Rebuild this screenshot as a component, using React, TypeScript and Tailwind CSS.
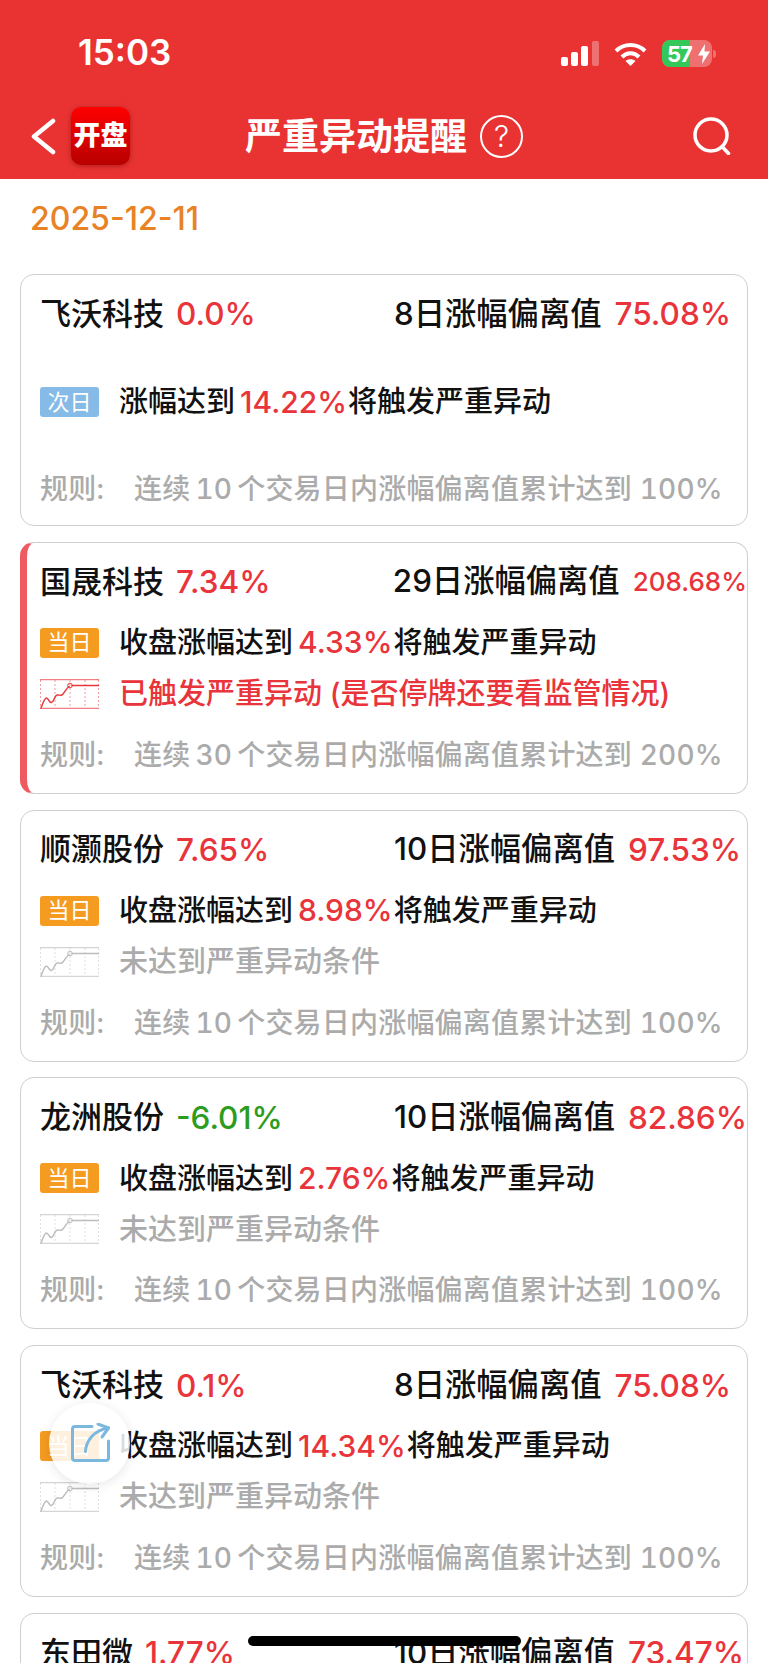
import { FC } from "react";

type Stock = {
	name: string;
	pct: string;
	green?: boolean;
	days: string;
	value: string;
	small?: boolean;
	tag: "次日" | "当日";
	prefix: string;
	target: string;
	status?: string;
	hit?: boolean;
	rule: string;
};

const RULE_10 = "连续\u200910\u2009个交易日内涨幅偏离值累计达到 100%";
const NOT_MET = "未达到严重异动条件";

const stocks: Stock[] = [
	{ name: "飞沃科技", pct: "0.0%", days: "8日涨幅偏离值", value: "75.08%", tag: "次日", prefix: "涨幅达到", target: "14.22%", rule: RULE_10 },
	{
		name: "国晟科技",
		pct: "7.34%",
		days: "29日涨幅偏离值",
		value: "208.68%",
		small: true,
		tag: "当日",
		prefix: "收盘涨幅达到",
		target: "4.33%",
		status: "已触发严重异动 (是否停牌还要看监管情况)",
		hit: true,
		rule: "连续\u200930\u2009个交易日内涨幅偏离值累计达到 200%",
	},
	{ name: "顺灏股份", pct: "7.65%", days: "10日涨幅偏离值", value: "97.53%", tag: "当日", prefix: "收盘涨幅达到", target: "8.98%", status: NOT_MET, rule: RULE_10 },
	{ name: "龙洲股份", pct: "-6.01%", green: true, days: "10日涨幅偏离值", value: "82.86%", tag: "当日", prefix: "收盘涨幅达到", target: "2.76%", status: NOT_MET, rule: RULE_10 },
	{ name: "飞沃科技", pct: "0.1%", days: "8日涨幅偏离值", value: "75.08%", tag: "当日", prefix: "收盘涨幅达到", target: "14.34%", status: NOT_MET, rule: RULE_10 },
	{ name: "东田微", pct: "1.77%", days: "10日涨幅偏离值", value: "73.47%", tag: "当日", prefix: "收盘涨幅达到", target: "5.12%", status: NOT_MET, rule: RULE_10 },
];

const ChartIcon: FC<{ hit?: boolean }> = ({ hit }) => {
	const color = hit ? "#e8383d" : "#bdbdbd";
	return (
		<svg width="59" height="30" viewBox="0 0 59 30" fill="none" className="shrink-0">
			<path d="M0.5 1V29M15 1V29M30 1V29M45 1V29M58.5 1V29" stroke={color} strokeWidth="0.7" strokeDasharray="2 2" opacity="0.7" />
			<path d="M0 0.7H59M0 29.3H59" stroke={color} strokeWidth="0.8" />
			<path d="M1 29C3 24 4.500 19 6.500 19C8.500 19 9 24 11.500 23.500C14 23 14.500 16.500 17 16C19.500 15.500 21 17.500 23 15C25 12.500 26.500 9.500 29 7.500M32 6.500H59" stroke={color} strokeWidth="1.500" strokeLinecap="round" />
			<circle cx="30" cy="6.500" r="2.300" stroke={color} strokeWidth="1" />
		</svg>
	);
};

const StockCard: FC<{ stock: Stock }> = ({ stock }) => {
	const three = !stock.status;
	return (
		<div
			className={`h-[252px] shrink-0 rounded-[14px] border border-[#cfcfcf] bg-white pt-[19px] font-medium ${
				stock.hit ? "border-l-[7px] border-l-[#ef5a60] pl-[13px]" : "pl-[19px]"
			}`}
		>
			<div className="flex h-[40px] items-center whitespace-nowrap">
				<div className="flex w-[354px] items-center">
					<span className="text-[31px] text-[#111]">{stock.name}</span>
					<span className={`ml-[12px] text-[31.5px] ${stock.green ? "text-[#2c9c1e]" : "text-[#e8343a]"}`}>{stock.pct}</span>
				</div>
				<span className="text-[31.3px] text-[#111]">{stock.days}</span>
				<span className={`ml-[13px] text-[#e8343a] ${stock.small ? "text-[26px]" : "text-[31.5px]"}`}>{stock.value}</span>
			</div>
			<div className={`flex h-[40px] items-center whitespace-nowrap ${three ? "mt-[48px]" : "mt-[21px]"}`}>
				<span
					className={`flex h-[30px] w-[59px] shrink-0 items-center justify-center rounded-[3px] text-[22px] font-normal text-white ${
						stock.tag === "次日" ? "bg-[#85bbe6]" : "bg-[#f49b20]"
					}`}
				>
					{stock.tag}
				</span>
				<span className="ml-[20px] text-[29px] text-[#111]">{stock.prefix}</span>
				<span className="ml-[5px] text-[30px] text-[#e8343a]">{stock.target}</span>
				<span className="ml-[1px] text-[29px] text-[#111]">将触发严重异动</span>
			</div>
			{stock.status && (
				<div className="mt-[11px] flex h-[40px] items-center whitespace-nowrap">
					<ChartIcon hit={stock.hit} />
					<span className={`ml-[20px] text-[29px] ${stock.hit ? "text-[#e8343a]" : "text-[#ababab]"}`}>{stock.status}</span>
				</div>
			)}
			<div className={`flex h-[40px] items-center whitespace-nowrap text-[28px] tracking-[0.2px] text-[#ababab] tabular-nums ${three ? "mt-[47px]" : "mt-[21px]"}`}>
				<span className="w-[94px]">规则:</span>
				<span>{stock.rule}</span>
			</div>
		</div>
	);
};

const StatusBar: FC = () => (
	<div className="flex h-[70px] items-end justify-between pl-[78px] pr-[52px]">
		<span className="text-[35px] leading-[36px] font-semibold text-white">15:03</span>
		<div className="flex items-center gap-[15px] pb-[3px]">
			<svg width="38" height="25" viewBox="0 0 38 25" fill="white">
				<rect x="0" y="16" width="7" height="9" rx="2" />
				<rect x="10" y="11" width="7" height="14" rx="2" />
				<rect x="20" y="5" width="7" height="20" rx="2" />
				<rect x="31" y="0" width="7" height="25" rx="2" opacity="0.3" />
			</svg>
			<svg width="33" height="24" viewBox="0 0 33 24" fill="none" stroke="white" strokeWidth="4">
				<path d="M2 9C10 1 23 1 31 9" />
				<path d="M8 15C13 10 20 10 25 15" />
				<path d="M16.500 24L11.500 19C14 16.500 19 16.500 21.500 19Z" fill="white" stroke="none" />
			</svg>
			<div className="flex items-center gap-[1px]">
				<div className="relative flex h-[27px] w-[50px] items-center rounded-[8px] bg-white/30">
					<div className="absolute inset-y-0 left-0 w-[28px] rounded-l-[8px] bg-[#34c759]" />
					<span className="relative ml-[5px] text-[22px] leading-none font-bold tracking-[-1px] text-white">57</span>
					<svg width="12" height="20" viewBox="0 0 12 20" fill="white" className="relative ml-[6px]">
						<path d="M7 0L0 11.500H5L4 20L12 7.500H6.500Z" />
					</svg>
				</div>
				<div className="h-[8px] w-[3px] rounded-r-full bg-white/30" />
			</div>
		</div>
	</div>
);

const Header: FC = () => (
	<div className="h-[179px] shrink-0 bg-[#e93333]">
		<StatusBar />
		<div className="mt-[37px] grid grid-cols-[1fr_auto_1fr] items-center pl-[31px] pr-[37px]">
			<div className="flex items-center gap-[15px]">
				<svg width="25" height="37" viewBox="0 0 25 37" fill="none" stroke="white" strokeWidth="4.500" strokeLinecap="round" strokeLinejoin="round">
					<path d="M22 3L3 18.500L22 34" />
				</svg>
				<div className="flex h-[58px] w-[59px] items-center justify-center rounded-[10px] bg-gradient-to-b from-[#ff0000] to-[#b80000] text-[27px] font-black whitespace-nowrap text-white shadow-[0_1px_5px_rgba(120,0,0,0.5)]">
					开盘
				</div>
			</div>
			<div className="ml-[6px] flex items-center gap-[13px]">
				<span className="text-[37px] leading-none font-bold whitespace-nowrap text-white">严重异动提醒</span>
				<span className="flex h-[43px] w-[43px] items-center justify-center rounded-full border-[2.5px] border-white text-[30px] leading-none font-light text-white">?</span>
			</div>
			<div className="flex justify-end">
				<svg width="38" height="38" viewBox="0 0 38 38" fill="none" stroke="white" strokeWidth="3.500" strokeLinecap="round">
					<circle cx="18" cy="18" r="16" />
					<path d="M29.500 30L35.500 36.500" />
				</svg>
			</div>
		</div>
	</div>
);

const App: FC = () => (
	<div className="relative flex h-[1663px] w-[768px] flex-col overflow-hidden bg-white [font-family:Inter,'Noto_Sans_CJK_SC',sans-serif]">
		<Header />
		<div className="mt-[20px] flex h-[40px] shrink-0 items-center pl-[30px] text-[32px] font-medium text-[#e88224]">2025-12-11</div>
		<div className="mt-[35px] flex flex-col gap-[15.8px] px-[20px]">
			{stocks.map((stock, i) => (
				<StockCard key={i} stock={stock} />
			))}
		</div>

		{/* floating share button */}
		<div className="absolute top-[1403px] left-[49px] flex h-[81px] w-[81px] items-center justify-center rounded-full bg-white/85 shadow-[0_2px_12px_rgba(0,0,0,0.1)]">
			<svg width="40" height="42" viewBox="0 0 40 42" fill="none" stroke="#7ab8de" strokeWidth="3" strokeLinecap="round" strokeLinejoin="round">
				<path d="M22 3.500H5C3.500 3.500 2.500 4.500 2.500 6V35C2.500 36.500 3.500 37.500 5 37.500H36C37.500 37.500 38.500 36.500 38.500 35V18" />
				<path d="M15.500 28.500C16 18 24 7 38.500 5" />
				<path d="M28 1L38.500 5L32 14" />
			</svg>
		</div>

		{/* home indicator */}
		<div className="absolute top-[1636px] left-[248px] h-[10px] w-[273px] rounded-full bg-black" />
	</div>
);

export default App;
